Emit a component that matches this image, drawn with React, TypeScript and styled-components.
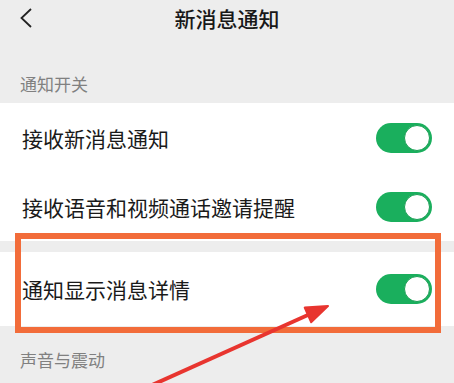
import React from "react";
import styled, { createGlobalStyle } from "styled-components";

const Global = createGlobalStyle`
  html, body { margin: 0; padding: 0; background: #ededed; }
  body { font-family: "Noto Sans CJK SC", "Noto Sans", sans-serif; }
`;

const Page = styled.div`
  position: relative;
  width: 454px;
  height: 383px;
  overflow: hidden;
  background: #ededed;
`;

const Header = styled.div`
  position: relative;
  height: 36px;
  display: flex;
  align-items: center;
  justify-content: center;
`;

const BackButton = styled.div`
  position: absolute;
  left: 19px;
  top: 8px;
  width: 14px;
  height: 20px;
  display: flex;
`;

const Title = styled.div`
  font-size: 21px;
  line-height: 24px;
  font-weight: 500;
  color: #181818;
`;

const SectionTitle = styled.div<{ $h: number; $pb: number }>`
  height: ${(p) => p.$h}px;
  box-sizing: border-box;
  display: flex;
  align-items: flex-end;
  padding: 0 0 ${(p) => p.$pb}px 20px;
  font-size: 17px;
  line-height: 18px;
  color: #808080;
`;

const Group = styled.div`
  background: #ffffff;
`;

const Gap = styled.div`
  height: 11px;
`;

const Row = styled.div<{ $h: number }>`
  height: ${(p) => p.$h}px;
  display: flex;
  align-items: center;
  justify-content: space-between;
  padding: 0 22px 0 22px;
`;

const Label = styled.div`
  font-size: 21px;
  line-height: 24px;
  color: #1a1a1a;
`;

const Switch = styled.div`
  width: 56px;
  height: 30px;
  border-radius: 15px;
  background: #1aaf5d;
  box-sizing: border-box;
  padding: 2px;
  display: flex;
  justify-content: flex-end;
  align-items: center;
`;

const Knob = styled.div`
  width: 26px;
  height: 26px;
  border-radius: 50%;
  background: #ffffff;
  box-sizing: border-box;
  border: 1.5px solid #1a9f55;
`;

const Highlight = styled.div`
  position: absolute;
  left: 15px;
  top: 233px;
  width: 426px;
  height: 100px;
  box-sizing: border-box;
  border: 6px solid #f26c3a;
  pointer-events: none;
`;

const ArrowLayer = styled.svg`
  position: absolute;
  left: 0;
  top: 0;
  pointer-events: none;
`;

function Toggle() {
  return (
    <Switch>
      <Knob />
    </Switch>
  );
}

export default function App() {
  return (
    <>
      <Global />
      <Page>
        <Header>
          <BackButton>
            <svg width="14" height="20" viewBox="0 0 14 20">
              <path d="M12 1 L2.5 10 L12 19" fill="none" stroke="#222" strokeWidth="1.8" />
            </svg>
          </BackButton>
          <Title>新消息通知</Title>
        </Header>
        <SectionTitle $h={67} $pb={10}>通知开关</SectionTitle>
        <Group>
          <Row $h={69}>
            <Label>接收新消息通知</Label>
            <Toggle />
          </Row>
          <Row $h={69}>
            <Label>接收语音和视频通话邀请提醒</Label>
            <Toggle />
          </Row>
        </Group>
        <Gap />
        <Group>
          <Row $h={74}>
            <Label>通知显示消息详情</Label>
            <Toggle />
          </Row>
        </Group>
        <SectionTitle $h={57} $pb={14}>声音与震动</SectionTitle>
        <Highlight />
        <ArrowLayer width="454" height="383" viewBox="0 0 454 383">
          <line x1="150" y1="386" x2="309" y2="314.5" stroke="#e8352f" strokeWidth="4" />
          <polygon points="328,306 311.1,322.2 304.7,307.6" fill="#e8352f" stroke="#e8352f" strokeWidth="2" strokeLinejoin="round" />
        </ArrowLayer>
      </Page>
    </>
  );
}
